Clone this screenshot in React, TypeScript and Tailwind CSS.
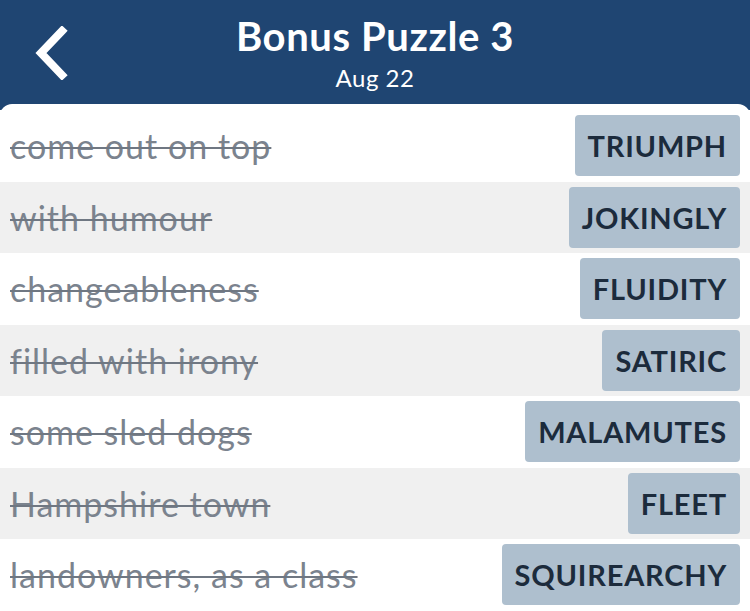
const clues = [
  { clue: "come out on top", answer: "TRIUMPH" },
  { clue: "with humour", answer: "JOKINGLY" },
  { clue: "changeableness", answer: "FLUIDITY" },
  { clue: "filled with irony", answer: "SATIRIC" },
  { clue: "some sled dogs", answer: "MALAMUTES" },
  { clue: "Hampshire town", answer: "FLEET" },
  { clue: "landowners, as a class", answer: "SQUIREARCHY" },
];

export default function App() {
  return (
    <div
      className="w-[750px] h-[611px] overflow-hidden bg-[#1f4572]"
      style={{ fontFamily: "Lato, 'Open Sans', sans-serif" }}
    >
      <header className="relative h-[104px] flex flex-col items-center text-white">
        <button className="absolute left-[25px] top-[26px] w-[48px] h-[54px] flex items-center justify-center">
          <svg width="40" height="54" viewBox="0 0 40 54" fill="none">
            <path
              d="M33 5 L12 27 L33 49"
              stroke="white"
              strokeWidth="8"
              strokeLinecap="square"
              strokeLinejoin="miter"
            />
          </svg>
        </button>
        <h1 className="mt-[12px] text-[40px] leading-[48px] font-bold tracking-[0.6px]">
          Bonus Puzzle 3
        </h1>
        <p className="mt-[3px] text-[24px] leading-[30px] tracking-[0.5px]">Aug 22</p>
      </header>

      <div className="bg-white rounded-t-[12px] pt-[6px]">
        {clues.map((row, index) => (
          <div
            key={index}
            className={`h-[71.5px] flex items-center justify-between pl-[10px] pr-[10px] ${
              index % 2 === 1 ? "bg-[#f0f0f0]" : "bg-white"
            }`}
          >
            <span className="text-[34px] tracking-[1px] text-[#7b838e] line-through decoration-[2px] decoration-[#6f7782]">
              {row.clue}
            </span>
            <span className="h-[61px] flex items-center px-[13px] rounded-[4px] bg-[#aebfce] text-[#1c2b3c] text-[29px] font-bold tracking-[0.8px]">
              {row.answer}
            </span>
          </div>
        ))}
      </div>
    </div>
  );
}
